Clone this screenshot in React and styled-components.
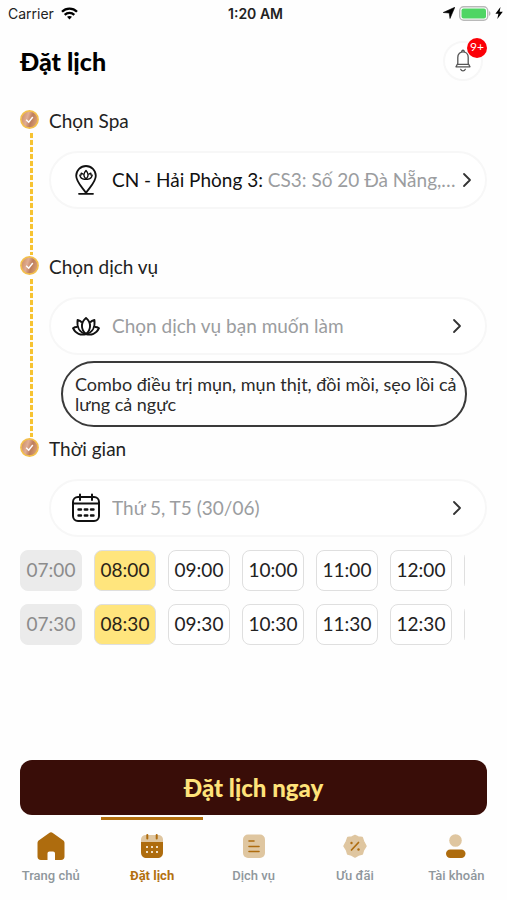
import React, { useState } from "react";
import styled, { createGlobalStyle } from "styled-components";

const GlobalStyle = createGlobalStyle`
  * {
    box-sizing: border-box;
  }
  body {
    margin: 0;
    background-color: #fefefe;
    color: #222;
    font-family: Lato, "Noto Sans", sans-serif;
  }
  button {
    font-family: inherit;
    cursor: pointer;
  }
`;

const Page = styled.div`
  display: flex;
  flex-direction: column;
  min-height: 100vh;
`;

const StatusBar = styled.div`
  display: grid;
  grid-template-columns: 1fr auto 1fr;
  align-items: center;
  height: 26px;
  padding: 0 4px 0 8px;
  font-family: Inter, sans-serif;
  font-size: 14px;
  color: #222;
`;
const StatusSide = styled.div`
  display: flex;
  align-items: center;
  gap: ${(props) => (props.$end ? "4px" : "7px")};
  justify-content: ${(props) => (props.$end ? "flex-end" : "flex-start")};
`;
const Clock = styled.span`
  font-weight: 600;
`;

const Header = styled.header`
  display: flex;
  align-items: center;
  justify-content: space-between;
  height: 70px;
  padding: 0 24px 0 20px;
`;
const Title = styled.h1`
  margin: 0;
  font-size: 25px;
  line-height: 32px;
  font-weight: 900;
  color: #000;
`;
const BellButton = styled.button`
  position: relative;
  display: flex;
  align-items: center;
  justify-content: center;
  width: 40px;
  height: 40px;
  padding: 0;
  border: 2px solid #f7f7f7;
  border-radius: 50%;
  background-color: #fff;
`;
const Badge = styled.span`
  position: absolute;
  top: -5px;
  right: -6px;
  width: 20px;
  height: 20px;
  border-radius: 50%;
  background-color: #fb0007;
  color: #fff;
  font-size: 12px;
  line-height: 18px;
  text-align: center;
`;

const Main = styled.main`
  flex: 1;
  padding: 13px 20px 0;
`;
const StepRow = styled.section`
  display: flex;
  gap: 9px;
`;
const Rail = styled.div`
  display: flex;
  flex-direction: column;
  width: 20px;
`;
const RailLine = styled.div`
  flex: 1;
  width: 3px;
  margin: 4px 0 0 10px;
  background: repeating-linear-gradient(#f7c331 0 5px, #fffaf0 5px 7px);
`;
const StepBody = styled.div`
  flex: 1;
  min-width: 0;
  padding-bottom: ${(props) => props.$space || "0"};
`;
const StepTitle = styled.h2`
  margin: 0 0 18px;
  font-size: 19px;
  line-height: 24px;
  font-weight: 400;
  color: #222;
`;
const Picker = styled.button`
  display: flex;
  align-items: center;
  gap: 12px;
  width: 100%;
  height: 58px;
  padding: 0 ${(props) => (props.$filled ? "9px" : "19px")} 0 21px;
  border: 2px solid #f7f7f7;
  border-radius: 29px;
  background-color: #fff;
  text-align: left;
  svg {
    flex: none;
  }
`;
const PickerText = styled.span`
  flex: 1;
  min-width: 0;
  margin-right: -14px;
  overflow: hidden;
  white-space: nowrap;
  text-overflow: ellipsis;
  font-size: 19px;
  line-height: 28px;
  color: #9b9da0;
`;
const Branch = styled.span`
  color: #111;
`;
const ServiceTag = styled.p`
  margin: 6px 20px 0 12px;
  padding: 11px 4px 11px 12px;
  border: 2px solid #3a3a3a;
  border-radius: 33px;
  font-size: 18px;
  line-height: 20px;
  color: #2b2b2b;
`;

const Slots = styled.div`
  display: grid;
  grid-template-rows: repeat(2, 41px);
  grid-auto-flow: column;
  grid-auto-columns: 62px;
  gap: 13px 12px;
  margin: 13px 22px 0 0;
  overflow: hidden;
`;
const slotColors = {
  past: "background-color: #ebebeb; border-color: #ebebeb; color: #8c8c8c;",
  picked: "background-color: #ffe57d; color: #2a2418;",
  open: "background-color: #fff; color: #222;",
};
const Slot = styled.button`
  padding: 0 0 3px;
  border: 1px solid #dfdfdf;
  border-radius: 8px;
  font-size: 19px;
  ${(props) => slotColors[props.$state]}
`;

const SubmitButton = styled.button`
  height: 55px;
  margin: 0 20px;
  border: 0;
  border-radius: 12px;
  background-color: #390d08;
  color: #ffe37a;
  font-size: 24px;
  font-weight: 900;
`;

const TabBar = styled.nav`
  display: flex;
  height: 83px;
  margin-top: 2px;
`;
const Tab = styled.a`
  flex: 1;
  display: flex;
  flex-direction: column;
  align-items: center;
  gap: 5px;
  padding-top: 11px;
  border-top: 3px solid ${(props) => (props.$active ? "#b3700f" : "transparent")};
  color: ${(props) => (props.$active ? "#b3700f" : "#8f979c")};
  font-family: Roboto, sans-serif;
  font-size: 13px;
  line-height: 20px;
  font-weight: ${(props) => (props.$active ? 700 : 500)};
  text-decoration: none;
`;

function WifiIcon() {
  return (
    <svg width="17" height="13" viewBox="0 0 17 13" fill="none" stroke="#000" strokeWidth="2.3">
      <path d="M1 4.8C5.2.6 11.8.6 16 4.8" />
      <path d="M3.7 7.8C6.4 5.2 10.6 5.2 13.3 7.8" />
      <path d="M6 9.8C7.4 8.6 9.6 8.6 11 9.8L8.5 12.4Z" fill="#000" stroke="none" />
    </svg>
  );
}

function LocationIcon() {
  return (
    <svg width="12" height="12" viewBox="0 0 12 12">
      <path d="M11.8.3L7 11.5L6.2 6L.2 5.5Z" fill="#000" stroke="#000" strokeWidth="0.6" />
    </svg>
  );
}

function BatteryIcon() {
  return (
    <svg width="32" height="15" viewBox="0 0 32 15">
      <rect x="0.7" y="0.7" width="28" height="13.6" rx="4" fill="#fff" stroke="#b9b9b9" strokeWidth="1.4" />
      <rect x="2.5" y="2.5" width="24.5" height="10" rx="2" fill="#4fd564" />
      <path d="M30 5C32 6 32 9 30 10Z" fill="#b9b9b9" />
    </svg>
  );
}

function BoltIcon() {
  return (
    <svg width="8" height="12" viewBox="0 0 8 12">
      <path d="M5.5 0L.4 6.8H3.4L2.3 12L7.8 4.8H4.6Z" fill="#000" />
    </svg>
  );
}

function BellIcon() {
  return (
    <svg width="18" height="24" viewBox="0 0 18 24" fill="none" stroke="#555" strokeWidth="1.3" strokeLinecap="round" strokeLinejoin="round">
      <path d="M7.7 2.8C7.5.7 10.5.7 10.3 2.8" />
      <path d="M3.8 14.5V8.5C3.8 1 14.2 1 14.2 8.5V14.5L16 17.8H2Z" />
      <path d="M3.4 15.3H14.6" />
      <path d="M6.7 20.3C7.6 22.4 10.4 22.4 11.3 20.3" />
    </svg>
  );
}

function StepDot() {
  return (
    <svg width="20" height="20" viewBox="0 0 20 20">
      <defs>
        <linearGradient id="copper" x1="0" y1="0" x2="1" y2="0.3">
          <stop offset="0" stopColor="#c98556" />
          <stop offset="0.45" stopColor="#e0ad94" />
          <stop offset="0.7" stopColor="#bd7d5c" />
          <stop offset="1" stopColor="#d59b70" />
        </linearGradient>
      </defs>
      <circle cx="9.5" cy="10.5" r="8.6" fill="url(#copper)" stroke="#f3bf4b" strokeWidth="1.6" />
      <path d="M6.2 10.8L8.7 13.2L12.8 8" fill="none" stroke="#fff" strokeWidth="1.5" />
    </svg>
  );
}

const lotus = (
  <>
    <path d="M14 4C8.6 8.5 8.6 15.5 14 20C19.4 15.5 19.4 8.5 14 4Z" />
    <path d="M10 8.5C8.8 7.2 7.5 6.4 5.6 6C4.6 13 7.5 18.6 14 20C20.5 18.6 23.4 13 22.4 6C20.5 6.4 19.2 7.2 18 8.5" />
    <path d="M5.5 13C3.9 12.8 2.4 13.2 1 14.2C3.5 19.8 9 21.5 14 20C19 21.5 24.5 19.8 27 14.2C25.6 13.2 24.1 12.8 22.5 13" />
  </>
);

function LotusIcon() {
  return (
    <svg width="28" height="24" viewBox="0 0 28 24" fill="none" stroke="#111" strokeWidth="1.9" strokeLinejoin="round">
      {lotus}
    </svg>
  );
}

function SpaPinIcon() {
  return (
    <svg width="28" height="30" viewBox="0 0 28 30" fill="none" stroke="#111" strokeWidth="1.8" strokeLinecap="round" strokeLinejoin="round">
      <path d="M14 28C11.5 23.5 4.2 17.5 4.2 10.8A9.8 9.8 0 0 1 23.8 10.8C23.8 17.5 16.5 23.5 14 28Z" />
      <path d="M7 28.8H21" />
      <path d="M14 5.5C11.2 8.5 11.2 11.5 14 14C16.8 11.5 16.8 8.5 14 5.5Z" strokeWidth="1.4" />
      <path d="M11.2 9.2L9.2 8.2L9 10L7.8 10.2C8.5 13.2 11 14.6 14 14C17 14.6 19.5 13.2 20.2 10.2L19 10L18.8 8.2L16.8 9.2" strokeWidth="1.4" />
    </svg>
  );
}

function CalendarIcon() {
  return (
    <svg width="28" height="30" viewBox="0 0 28 30" fill="none" stroke="#111" strokeWidth="2" strokeLinecap="round">
      <rect x="1" y="4" width="26" height="24" rx="5" />
      <path d="M1 10.5H27M8 1.5V7M20 1.5V7" />
      <path d="M6.5 16.5H9M12.8 16.5H15.3M19 16.5H21.5M6.5 22.5H9M12.8 22.5H15.3M19 22.5H21.5" strokeWidth="2.4" />
    </svg>
  );
}

function Chevron() {
  return (
    <svg width="18" height="18" viewBox="0 0 18 18" fill="none" stroke="#333" strokeWidth="1.8" strokeLinecap="round" strokeLinejoin="round">
      <path d="M6 3L12 9L6 15" />
    </svg>
  );
}

function HomeTabIcon() {
  return (
    <svg width="30" height="30" viewBox="0 0 30 30">
      <path d="M13.2 1.9C14.3 1.1 15.7 1.1 16.8 1.9L27 9.3C28 10.1 28.5 11 28.5 12.3V25.5C28.5 27.8 27.3 29 25 29H19V22.5C19 21.3 18.2 20.5 17 20.5H13.5C12.3 20.5 11.5 21.3 11.5 22.5V29H5C2.7 29 1.5 27.8 1.5 25.5V12.3C1.5 11 2 10.1 3 9.3Z" fill="#ae6c0e" />
    </svg>
  );
}

function BookTabIcon() {
  return (
    <svg width="30" height="30" viewBox="0 0 30 30">
      <path d="M4 11V9C4 5.5 6 4 9 4H21C24 4 26 5.5 26 9V11Z" fill="#dfc6a0" />
      <path d="M4 11H26V21C26 25 24 27 20 27H10C6 27 4 25 4 21Z" fill="#ae6c0e" />
      <path d="M10.3 4V7.5M19.7 4V7.5" stroke="#ae6c0e" strokeWidth="2" strokeLinecap="round" />
      <path d="M9 16H11M14 16H16M19 16H21M9 21H11M14 21H16M19 21H21" stroke="#f0dfc4" strokeWidth="2" />
    </svg>
  );
}

function ServiceTabIcon() {
  return (
    <svg width="30" height="30" viewBox="0 0 30 30">
      <rect x="4" y="3.5" width="22" height="23.5" rx="5" fill="#dfc6a0" />
      <path d="M10 10H15M10 15.5H20M10 20.5H20" stroke="#ae6c0e" strokeWidth="1.6" strokeLinecap="round" />
    </svg>
  );
}

function OfferTabIcon() {
  return (
    <svg width="30" height="30" viewBox="0 0 30 30">
      <path d="M15 4.5L18.2 6L22.2 6.5L23.5 10.3L26 15L23.5 19L22.3 23L18.5 24L15 26L11.5 24L7.7 23L6.5 19L4 15L6.5 10.3L7.8 6.5L11.8 6Z" fill="#dfc6a0" stroke="#dfc6a0" strokeWidth="1.5" strokeLinejoin="round" />
      <path d="M11.5 19L18.5 11.5" stroke="#ae6c0e" strokeWidth="1.7" strokeLinecap="round" />
      <circle cx="11.5" cy="12" r="1.2" fill="#ae6c0e" />
      <circle cx="18.5" cy="18.5" r="1.2" fill="#ae6c0e" />
    </svg>
  );
}

function AccountTabIcon() {
  return (
    <svg width="30" height="30" viewBox="0 0 30 30">
      <circle cx="14.5" cy="9.5" r="6.3" fill="#dfc6a0" />
      <rect x="5" y="18.5" width="19.5" height="8.5" rx="4.2" fill="#ae6c0e" />
    </svg>
  );
}

const times = [
  "07:00", "07:30", "08:00", "08:30", "09:00", "09:30", "10:00",
  "10:30", "11:00", "11:30", "12:00", "12:30", "13:00", "13:30",
];

const tabs = [
  { label: "Trang chủ", Icon: HomeTabIcon },
  { label: "Đặt lịch", Icon: BookTabIcon },
  { label: "Dịch vụ", Icon: ServiceTabIcon },
  { label: "Ưu đãi", Icon: OfferTabIcon },
  { label: "Tài khoản", Icon: AccountTabIcon },
];

function Step({ title, space, last, children }) {
  return (
    <StepRow>
      <Rail>
        <StepDot />
        {!last && <RailLine />}
      </Rail>
      <StepBody $space={space}>
        <StepTitle>{title}</StepTitle>
        {children}
      </StepBody>
    </StepRow>
  );
}

function App() {
  const [picked, setPicked] = useState(["08:00", "08:30"]);

  const slotState = (time) => {
    if (time < "08:00") return "past";
    return picked.includes(time) ? "picked" : "open";
  };
  const handlePick = (time) => () => {
    setPicked(
      picked.includes(time)
        ? picked.filter((item) => item !== time)
        : [...picked, time]
    );
  };

  return (
    <Page>
      <GlobalStyle />
      <StatusBar>
        <StatusSide>
          Carrier
          <WifiIcon />
        </StatusSide>
        <Clock>1:20 AM</Clock>
        <StatusSide $end>
          <LocationIcon />
          <BatteryIcon />
          <BoltIcon />
        </StatusSide>
      </StatusBar>
      <Header>
        <Title>Đặt lịch</Title>
        <BellButton type="button">
          <BellIcon />
          <Badge>9+</Badge>
        </BellButton>
      </Header>
      <Main>
        <Step title="Chọn Spa" space="46px">
          <Picker type="button" $filled>
            <SpaPinIcon />
            <PickerText>
              <Branch>CN - Hải Phòng 3:</Branch> CS3: Số 20 Đà Nẵng, Ngô Quyền
            </PickerText>
            <Chevron />
          </Picker>
        </Step>
        <Step title="Chọn dịch vụ" space="10px">
          <Picker type="button">
            <LotusIcon />
            <PickerText>Chọn dịch vụ bạn muốn làm</PickerText>
            <Chevron />
          </Picker>
          <ServiceTag>
            Combo điều trị mụn, mụn thịt, đồi mồi, sẹo lồi cả lưng cả ngực
          </ServiceTag>
        </Step>
        <Step title="Thời gian" last>
          <Picker type="button">
            <CalendarIcon />
            <PickerText>Thứ 5, T5 (30/06)</PickerText>
            <Chevron />
          </Picker>
        </Step>
        <Slots>
          {times.map((time) => (
            <Slot
              key={time}
              type="button"
              $state={slotState(time)}
              disabled={slotState(time) === "past"}
              onClick={handlePick(time)}
            >
              {time}
            </Slot>
          ))}
        </Slots>
      </Main>
      <SubmitButton type="button">Đặt lịch ngay</SubmitButton>
      <TabBar>
        {tabs.map(({ label, Icon }) => (
          <Tab key={label} href="#" $active={label === "Đặt lịch"}>
            <Icon />
            {label}
          </Tab>
        ))}
      </TabBar>
    </Page>
  );
}

export default App;
